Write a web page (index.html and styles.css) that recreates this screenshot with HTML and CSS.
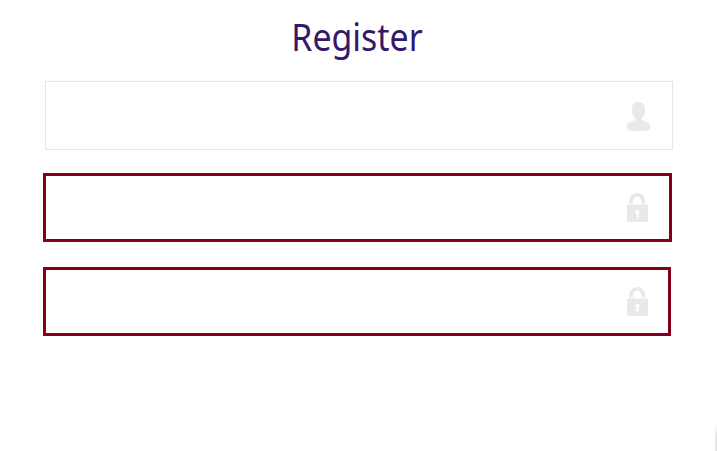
FILE: index.html
```html
<!DOCTYPE html>
<html lang="en">
<head>
<meta charset="utf-8">
<title>Register</title>
<link rel="stylesheet" href="styles.css">
</head>
<body>
<main class="register">
  <h1 class="title">Register</h1>
  <form class="form">
    <div class="field user">
      <input class="input" type="text" aria-label="Username">
      <svg class="icon" width="24" height="30" viewBox="0 0 24 30"><path d="M11.500 1C7 1 4.800 3.800 4.800 8c0 4.400 1.200 7.600 3.700 9.800v1C7 20.300 0 20.700 0 24.500V28c1 1.800 5 2 11.500 2s10.500-.2 11.500-2v-3.500c0-3.800-7-4.200-8.500-5.700v-1C17 15.600 18.200 12.400 18.200 8 18.200 3.800 16 1 11.500 1Z"/></svg>
    </div>
    <div class="field invalid first">
      <input class="input" type="password" aria-label="Password">
      <svg class="icon" width="24" height="30" viewBox="0 0 24 30"><path fill-rule="evenodd" d="M2 10.500C2 4 5.200 0 10.300 0S18.500 4 18.500 10.500H14.500C14.500 6 13 3.800 10.300 3.800S6 6 6 10.500ZM0 11.500h21v17.500H0ZM8.300 18.500V20h1v4.500h2.400v-4.500h.7v-1.500a2.100 2.100 0 0 0-4.100 0Z"/></svg>
    </div>
    <div class="field invalid">
      <input class="input" type="password" aria-label="Confirm password">
      <svg class="icon" width="24" height="30" viewBox="0 0 24 30"><path fill-rule="evenodd" d="M2 10.500C2 4 5.200 0 10.300 0S18.500 4 18.500 10.500H14.500C14.500 6 13 3.800 10.300 3.800S6 6 6 10.500ZM0 11.500h21v17.500H0ZM8.300 18.500V20h1v4.500h2.400v-4.500h.7v-1.500a2.100 2.100 0 0 0-4.100 0Z"/></svg>
    </div>
  </form>
</main>
<div class="edge"></div>
</body>
</html>
```
FILE: styles.css
```css
* { box-sizing: border-box; }
body { margin: 0; height: 451px; background: #fff; overflow: hidden; }
.register { padding-top: 11px; }
.title {
  margin: 0 3px 0 0;
  height: 70px;
  color: #33186b;
  font: 400 38px/51px "Noto Sans", "Open Sans", sans-serif;
  text-align: center;
  transform: scaleX(.892);
}
.form { margin-left: 43px; }
.field {
  display: flex;
  align-items: center;
  width: 628px;
  height: 69px;
  border: 3px solid #84001a;
  background: #fff;
}
.field.user { margin-left: 2px; border: 1px solid #e5e5e5; margin-bottom: 23px; padding-right: 21px; }
.first { width: 629px; margin-bottom: 25px; }
.invalid { padding-right: 18px; }
.invalid:last-child { padding-right: 17px; }
.input { flex: 1; height: 100%; border: 0; padding: 0 16px; outline: 0; background: transparent; font: 20px "Noto Sans", sans-serif; }
.icon { flex: none; fill: #e9e9e9; }
.edge { position: absolute; right: 0; bottom: 0; width: 2px; height: 28px; background: linear-gradient(#fff, #e5e5e5 50%); }
```
